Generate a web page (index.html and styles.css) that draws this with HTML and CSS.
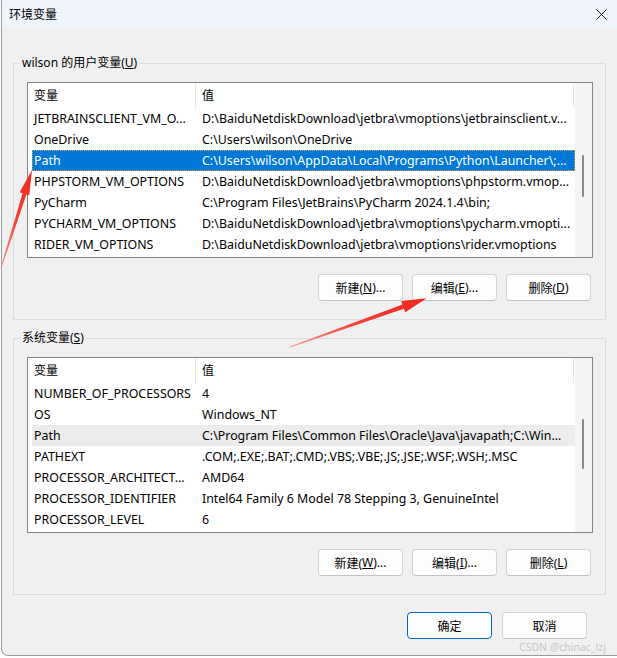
FILE: index.html
```html
<!DOCTYPE html>
<html lang="zh-CN">
<head>
<meta charset="utf-8">
<title>环境变量</title>
<link rel="stylesheet" href="styles.css">
</head>
<body>
<div class="window">
  <div class="titlebar">
    <span class="title">环境变量</span>
    <svg class="close" width="11" height="11" viewBox="0 0 11 11"><path d="M0.5 0.5 L10.5 10.5 M10.5 0.5 L0.5 10.5" stroke="#1b1b1b" stroke-width="1"/></svg>
  </div>
  <div class="content">
    <fieldset class="group">
      <legend>wilson 的用户变量(<u>U</u>)</legend>
      <div class="listbox">
        <div class="list-main">
          <div class="list-head"><div class="head-cell">变量</div><div class="head-cell">值</div></div>
          <div class="rows">
            <div class="row"><span class="name">JETBRAINSCLIENT_VM_O...</span><span class="val">D:\BaiduNetdiskDownload\jetbra\vmoptions\jetbrainsclient.v...</span></div>
            <div class="row"><span class="name">OneDrive</span><span class="val">C:\Users\wilson\OneDrive</span></div>
            <div class="row selected"><span class="name">Path</span><span class="val">C:\Users\wilson\AppData\Local\Programs\Python\Launcher\;...</span></div>
            <div class="row"><span class="name">PHPSTORM_VM_OPTIONS</span><span class="val">D:\BaiduNetdiskDownload\jetbra\vmoptions\phpstorm.vmop...</span></div>
            <div class="row"><span class="name">PyCharm</span><span class="val">C:\Program Files\JetBrains\PyCharm 2024.1.4\bin;</span></div>
            <div class="row"><span class="name">PYCHARM_VM_OPTIONS</span><span class="val">D:\BaiduNetdiskDownload\jetbra\vmoptions\pycharm.vmopti...</span></div>
            <div class="row"><span class="name">RIDER_VM_OPTIONS</span><span class="val">D:\BaiduNetdiskDownload\jetbra\vmoptions\rider.vmoptions</span></div>
          </div>
        </div>
        <div class="scrollbar"><div class="thumb thumb-user"></div></div>
      </div>
      <div class="btn-row">
        <button class="btn">新建(<u>N</u>)...</button>
        <button class="btn">编辑(<u>E</u>)...</button>
        <button class="btn">删除(<u>D</u>)</button>
      </div>
    </fieldset>

    <fieldset class="group group-sys">
      <legend>系统变量(<u>S</u>)</legend>
      <div class="listbox">
        <div class="list-main">
          <div class="list-head"><div class="head-cell">变量</div><div class="head-cell">值</div></div>
          <div class="rows">
            <div class="row"><span class="name">NUMBER_OF_PROCESSORS</span><span class="val">4</span></div>
            <div class="row"><span class="name">OS</span><span class="val">Windows_NT</span></div>
            <div class="row hover"><span class="name">Path</span><span class="val">C:\Program Files\Common Files\Oracle\Java\javapath;C:\Win...</span></div>
            <div class="row"><span class="name">PATHEXT</span><span class="val">.COM;.EXE;.BAT;.CMD;.VBS;.VBE;.JS;.JSE;.WSF;.WSH;.MSC</span></div>
            <div class="row"><span class="name">PROCESSOR_ARCHITECT...</span><span class="val">AMD64</span></div>
            <div class="row"><span class="name">PROCESSOR_IDENTIFIER</span><span class="val">Intel64 Family 6 Model 78 Stepping 3, GenuineIntel</span></div>
            <div class="row"><span class="name">PROCESSOR_LEVEL</span><span class="val">6</span></div>
          </div>
        </div>
        <div class="scrollbar"><div class="thumb thumb-sys"></div></div>
      </div>
      <div class="btn-row">
        <button class="btn">新建(<u>W</u>)...</button>
        <button class="btn">编辑(<u>I</u>)...</button>
        <button class="btn">删除(<u>L</u>)</button>
      </div>
    </fieldset>

    <div class="dialog-btns">
      <button class="btn btn-default">确定</button>
      <button class="btn">取消</button>
    </div>
  </div>
</div>

<svg class="arrows" width="617" height="658" viewBox="0 0 617 658">
  <defs>
    <linearGradient id="g1" x1="1" y1="268" x2="32" y2="170" gradientUnits="userSpaceOnUse">
      <stop offset="0" stop-color="#f7a09a"/>
      <stop offset="0.45" stop-color="#f2443a"/>
      <stop offset="1" stop-color="#f0261c"/>
    </linearGradient>
    <linearGradient id="g2" x1="290" y1="347" x2="427" y2="298" gradientUnits="userSpaceOnUse">
      <stop offset="0" stop-color="#f7a09a"/>
      <stop offset="0.45" stop-color="#f2443a"/>
      <stop offset="1" stop-color="#f0261c"/>
    </linearGradient>
  </defs>
  <polygon fill="url(#g1)" points="0.5,267.8 22.6,193.2 19.7,192.3 32,170 29.3,195.3 26.4,194.4 1.5,268.2"/>
  <polygon fill="url(#g2)" points="289.8,346.5 402.5,304.6 401.2,301.0 426.7,298.3 405.2,312.3 403.9,308.8 290.2,347.5"/>
</svg>
<div class="watermark">CSDN @chinac_lzj</div>
</body>
</html>
```

FILE: styles.css
```css
html, body {
  margin: 0;
  padding: 0;
}
body {
  width: 617px;
  height: 658px;
  background: #ffffff;
  font-family: "Noto Sans", "Noto Sans CJK SC", sans-serif;
  font-size: 12px;
  color: #000;
  position: relative;
  overflow: hidden;
}
.window {
  margin-left: 1px;
  width: 616px;
  height: 656px;
  box-sizing: border-box;
  border-left: 1px solid #9c9c9c;
  border-bottom: 1px solid #9c9c9c;
  border-bottom-left-radius: 7px;
  background: #f0f0f0;
  display: flex;
  flex-direction: column;
  overflow: hidden;
}
.titlebar {
  height: 28px;
  flex: none;
  background: #eef4f9;
  display: flex;
  align-items: center;
  justify-content: space-between;
  padding: 0 10px 0 7px;
}
.title {
  font-family: "Noto Sans CJK SC", sans-serif;
  font-size: 12px;
  line-height: 16px;
}
.close {
  display: block;
}
.content {
  padding: 27px 0 0 11px;
}
.group {
  width: 593px;
  box-sizing: border-box;
  margin: 0;
  min-width: 0;
  border: 1px solid #dcdcdc;
  padding: 0 12px 18px 13px;
}
.group legend {
  margin-left: -7px;
  padding: 0 2px;
  line-height: 16px;
  height: 16px;
  font-size: 12px;
}
.group-sys {
  margin-top: 10px;
}
.listbox {
  margin-top: 11px;
  height: 176px;
  box-sizing: border-box;
  border: 1px solid #858585;
  background: #fff;
  display: flex;
  overflow: hidden;
  font-size: 12.4px;
}
.list-main {
  flex: 1;
  min-width: 0;
}
.list-head {
  display: grid;
  grid-template-columns: 168px 378px;
  height: 25px;
}
.head-cell {
  box-sizing: border-box;
  border-right: 1px solid #e5e5e5;
  padding-left: 6px;
  line-height: 25px;
  font-size: 12px;
}
.rows {
  padding-left: 4px;
}
.row {
  display: grid;
  grid-template-columns: 164px 1fr;
  height: 21px;
  line-height: 21px;
  white-space: nowrap;
}
.row span {
  overflow: hidden;
}
.row .name {
  padding-left: 2px;
}
.row .val {
  padding-left: 6px;
}
.row.selected {
  background: #0078d7;
  color: #fff;
  outline: 1px dotted #e3a04e;
  outline-offset: -1px;
}
.row.hover {
  background: #ececec;
}
.scrollbar {
  width: 17px;
  flex: none;
  background: #f4f4f4;
}
.thumb {
  width: 2px;
  margin-left: 7px;
  background: #8a8a8a;
  border-radius: 1px;
}
.thumb-user {
  margin-top: 72px;
  height: 42px;
}
.thumb-sys {
  margin-top: 61px;
  height: 50px;
}
.btn-row {
  display: flex;
  justify-content: flex-end;
  gap: 9px;
  margin-top: 16px;
  padding-right: 2px;
}
.btn {
  width: 85px;
  height: 27px;
  box-sizing: border-box;
  padding: 0;
  margin: 0;
  background: #fdfdfd;
  border: 1px solid #d2d2d2;
  border-bottom-color: #c2c2c2;
  border-radius: 4px;
  font-family: "Noto Sans", "Noto Sans CJK SC", sans-serif;
  font-size: 12px;
  color: #000;
  display: flex;
  align-items: center;
  justify-content: center;
}
.btn-default {
  border: 1px solid #0067c0;
}
.dialog-btns {
  display: flex;
  justify-content: flex-end;
  gap: 10px;
  margin-top: 17px;
  padding-right: 30px;
}
.arrows {
  position: absolute;
  left: 0;
  top: 0;
  pointer-events: none;
}
.watermark {
  position: absolute;
  left: 519px;
  top: 640px;
  font-family: "Noto Sans", sans-serif;
  font-size: 10.5px;
  line-height: 14px;
  color: #c4c4c4;
  text-shadow: 0 0 1px #fff;
  white-space: nowrap;
}
```
